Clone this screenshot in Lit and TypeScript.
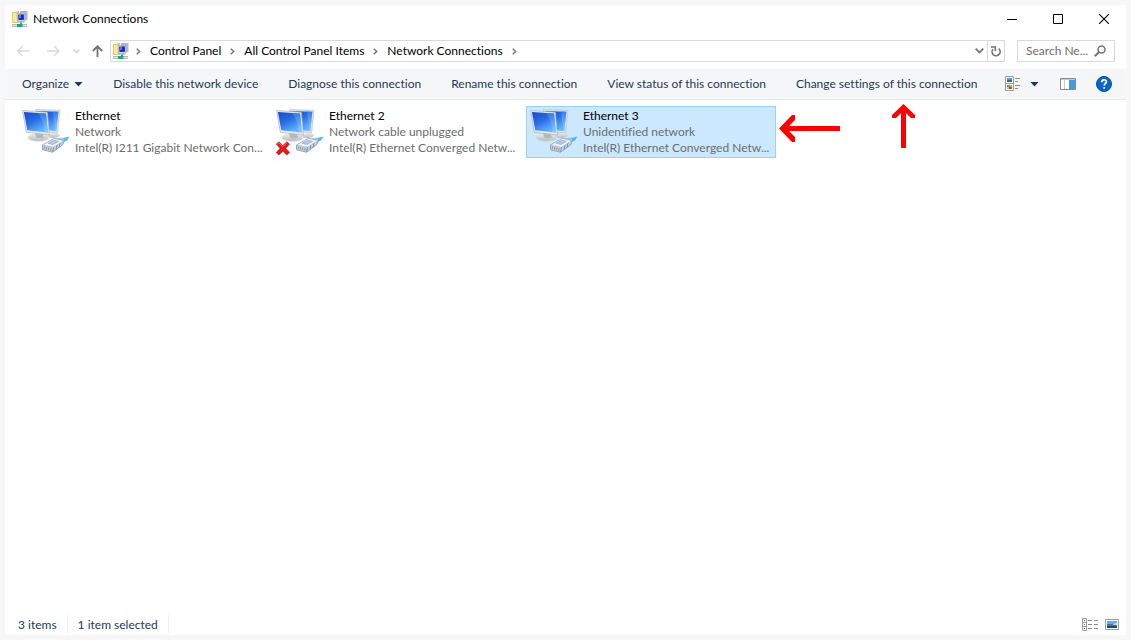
import { LitElement, html, css, svg, nothing } from "lit";
import { customElement, property, state } from "lit/decorators.js";
import { classMap } from "lit/directives/class-map.js";

interface Connection {
  name: string;
  status: string;
  device: string;
  unplugged?: boolean;
}

const connections: Connection[] = [
  { name: "Ethernet", status: "Network", device: "Intel(R) I211 Gigabit Network Con..." },
  {
    name: "Ethernet 2",
    status: "Network cable unplugged",
    device: "Intel(R) Ethernet Converged Netw...",
    unplugged: true,
  },
  { name: "Ethernet 3", status: "Unidentified network", device: "Intel(R) Ethernet Converged Netw..." },
];

const crumbs = ["Control Panel", "All Control Panel Items", "Network Connections"];

const commands = [
  "Disable this network device",
  "Diagnose this connection",
  "Rename this connection",
  "View status of this connection",
  "Change settings of this connection",
];

const folderIcon = html`<svg width="16" height="16" viewBox="0 0 16 16" aria-hidden="true">
  <path d="M0 1h4l1-1h2v11l-2 1H0z" fill="#ecca6c" />
  <path d="M1 2h5v8.500L4 11H1z" fill="#fbe7a0" />
  <path d="M8 0h7.500v9H8z" fill="#b4b8ca" />
  <path d="M9 1h5.500v6.500H9z" fill="#a9b7ea" />
  <path d="M5 2.500 12.500 2l.5 8-7.500.500z" fill="#d5d9e6" stroke="#8d93ab" stroke-width=".6" />
  <path d="M6.200 3.700 11.700 3.200l.3 5.500-5.500.4z" fill="#1525b4" />
  <path d="M7 4.200 9 4l.2 3-2 .3z" fill="#5b83f2" />
  <path d="M6 10.500h6.500v1H6z" fill="#a2a6b6" />
  <path d="M8 11.500h2V13H8z" fill="#18b573" />
  <path d="M0 13.500h15M0 15.500h15" stroke="#b3bcbc" />
  <path d="M0 14.500h15" stroke="#dfe4e4" />
  <path d="M5 13h5.500v3H5z" fill="#12b06c" />
</svg>`;

@customElement("connection-icon")
export class ConnectionIcon extends LitElement {
  @property({ type: Boolean }) unplugged = false;

  static styles = css`
    :host { display: block; width: 48px; height: 48px; }
    svg { display: block; overflow: visible; }
  `;

  render() {
    return html`<svg width="48" height="48" viewBox="0 0 48 48" aria-hidden="true">
      <defs>
        <linearGradient id="screen" x1="0" y1="0" x2=".6" y2="1">
          <stop offset="0" stop-color="#1747c4" />
          <stop offset="0.500" stop-color="#2a6ee6" />
          <stop offset="1" stop-color="#62b6ff" />
        </linearGradient>
        <linearGradient id="shine" x1="0" y1="0" x2="0" y2="1">
          <stop offset="0" stop-color="#3f84ee" />
          <stop offset="1" stop-color="#9bd3ff" />
        </linearGradient>
        <linearGradient id="stand" x1="0" y1="0" x2="0" y2="1">
          <stop offset="0" stop-color="#eceeef" />
          <stop offset="1" stop-color="#b9bdc1" />
        </linearGradient>
      </defs>
      <path d="M25 27.500 34 25.500l4 2.500c0 2-5 3.500-10 3z" fill="url(#stand)" />
      <path d="M13.500 2.500 38 3.300 35.700 26 17 24.500z" fill="#dfe2e5" stroke="#b9bec2" stroke-width=".6" />
      <path d="M15 4 36.300 4.700 34.300 24 18 22.800z" fill="url(#screen)" />
      <path d="M31 4.500 36.300 4.700 34.300 24 33.500 23.900z" fill="url(#shine)" opacity=".7" />
      <ellipse cx="16.500" cy="30.500" rx="10.500" ry="3.800" fill="url(#stand)" stroke="#d2d5d7" stroke-width=".5" />
      <path d="M13 25.500 20 26l2 4c-2 1.800-6 1.800-8 .5z" fill="#b3b8bc" />
      <path d="M.5 3.500 25.300 5.200 27.500 28 4.300 25.300z" fill="#e6e8ea" stroke="#b0b5ba" stroke-width=".7" />
      <path d="M1.900 4.900 24 6.500 26 25.500 5.300 23.200z" fill="url(#screen)" />
      <path d="M16 5.900 24 6.500 26 25.500 22.500 25.100C22.500 17 20 11 16 5.900z" fill="url(#shine)" opacity=".65" />
      <path d="M39.500 33.500 41 31l6.500-1.500-2.500 4-3.500 1.500z" fill="#52bce8" />
      <path d="M36 31.500 41.500 31l1.500 2-4 2.500z" fill="#a5d9ee" stroke="#6ba4c8" stroke-width=".4" />
      <path d="M20.500 38 32.500 31.300 42.500 33.500 40.500 38 30.500 45.300 20.500 42.700z" fill="#c3d1e8" stroke="#758bb4" stroke-width=".7" />
      <path d="M20.500 38 32.500 31.500 42 33.600 31.500 40.200z" fill="#f0f5fb" stroke="#94a8cb" stroke-width=".5" />
      <path d="M31.500 40.200 30.700 45M35 38.200 34 42.500M38 36.300 37 40.300" stroke="#7288b3" stroke-width=".9" />
      <path d="M22.300 39.300v2.800M24.500 39.900v2.800M26.700 40.400v2.800M28.900 41v2.800" stroke="#9c9355" stroke-width=".9" />
      <path d="M26 36.300 31.500 33.200 36.500 34.300 31 37.600z" fill="#b6c8e5" stroke="#8399c4" stroke-width=".5" />
      ${this.unplugged
        ? svg`<path d="M.3 37 3 34.800 6.800 38.500 10.800 34.800 13.500 37 9.800 41.300 13.500 45.500 10.800 48 6.800 44.200 3 48 .3 45.500 4 41.300z" fill="#e01b1b" stroke="#b01316" stroke-width=".6"/><path d="M1.500 37 3 35.900 6.800 39.700 10.800 35.900" fill="none" stroke="#f27b77" stroke-width=".9"/>`
        : nothing}
    </svg>`;
  }
}

@customElement("app-root")
export class AppRoot extends LitElement {
  @state() private selected = 2;

  static styles = css`
    :host {
      display: block;
      box-sizing: border-box;
      min-height: 100vh;
      padding: 5px;
      background: #f7f7f7;
      font: 12px/16px Lato, "Open Sans", sans-serif;
      font-variant-ligatures: none;
      color: #000;
    }
    * { box-sizing: border-box; }
    button, input {
      font: inherit;
      font-variant-ligatures: none;
      color: inherit;
      background: none;
      border: 0;
      padding: 0;
      margin: 0;
      outline: none;
    }
    svg { display: block; flex: none; }
    .window {
      display: flex;
      flex-direction: column;
      min-height: calc(100vh - 10px);
      background: #fff;
    }
    .titlebar { display: flex; align-items: center; gap: 2px; height: 28px; padding-left: 7px; }
    .title { flex: 1; margin: 0; padding-left: 3px; font: inherit; }
    .caption { display: grid; place-items: center; width: 44px; height: 28px; }
    .navigation { display: flex; align-items: center; padding: 7px 11px 7px 12px; }
    .history { display: flex; align-items: center; }
    .nav { display: grid; place-items: center; height: 22px; }
    .nav.back { width: 13px; }
    .nav.forward { width: 13px; margin-left: 17px; }
    .nav.recent { width: 7px; margin: 0 12px 0 13px; }
    .nav.up { width: 11px; margin-right: 7px; }
    .address {
      flex: 1;
      display: flex;
      align-items: center;
      height: 22px;
      border: 1px solid #d9d9d9;
      padding-left: 2px;
    }
    .trail { flex: 1; display: flex; align-items: center; gap: 9px; padding: 0 0 0 7px; margin: 0; list-style: none; }
    .trail li { display: flex; align-items: center; gap: 9px; }
    .trail a { color: inherit; text-decoration: none; }
    .drop { display: grid; place-items: center; width: 15px; height: 20px; }
    .drop.refresh { width: 17px; border-left: 1px solid #d9d9d9; }
    .search {
      display: flex;
      align-items: center;
      width: 98px;
      height: 22px;
      margin-left: 12px;
      padding: 0 8px;
      border: 1px solid #d9d9d9;
      color: #6d6d6d;
    }
    .search input { flex: 1; min-width: 0; }
    .search input::placeholder { color: #6d6d6d; opacity: 1; }
    .commands {
      display: flex;
      align-items: center;
      height: 31px;
      padding: 0 14px 0 2px;
      background: #f5f6f7;
      border-bottom: 1px solid #e8e9ea;
      color: #1e395b;
    }
    .command { display: flex; align-items: center; gap: 5px; padding: 0 15px; height: 30px; white-space: nowrap; }
    .tools { flex: 1; display: flex; align-items: center; justify-content: flex-end; }
    .tool { display: grid; place-items: center; height: 30px; }
    .tool.more { margin: 0 21px 0 9px; }
    .tool.help { margin-left: 20px; }
    .content { position: relative; flex: 1; padding: 6px 13px; }
    .items { display: flex; flex-wrap: wrap; gap: 4px; }
    .item {
      display: flex;
      gap: 5px;
      width: 250px;
      height: 52px;
      padding: 0 3px;
      border: 1px solid transparent;
      text-align: left;
      white-space: nowrap;
    }
    .item.selected { background: #cce8ff; border-color: #99d1ff; }
    .details { display: flex; flex-direction: column; padding-top: 1px; color: #6d6d6d; }
    .name { color: #000; }
    .pointer { position: absolute; pointer-events: none; }
    .pointer.left { left: 774px; top: 15px; }
    .pointer.upward { left: 887px; top: 4px; }
    .status {
      display: flex;
      align-items: center;
      height: 22px;
      padding: 0 7px 0 13px;
      color: #1e395b;
    }
    .count { padding: 2px 10px 0 0; margin-right: 10px; border-right: 1px solid #f0f0f0; }
    .views { flex: 1; display: flex; justify-content: flex-end; align-items: center; gap: 7px; }
  `;

  private chevron() {
    return html`<svg width="5" height="7" viewBox="0 0 5 7" aria-hidden="true">
      <path d="M.7.700 3.700 3.500.700 6.300" fill="none" stroke="#767676" stroke-width="1.500" />
    </svg>`;
  }

  private arrow(stroke: string, flip = false) {
    return html`<svg width="13" height="12" viewBox="0 0 13 12" aria-hidden="true">
      <path d=${flip ? "M0 6h12M7 1l5 5-5 5" : "M12 6H.5M5.500 1l-5 5 5 5"} fill="none" stroke=${stroke} stroke-width="1.500" />
    </svg>`;
  }

  render() {
    return html`<div class="window">
      <header class="titlebar">
        ${folderIcon}
        <h1 class="title">Network Connections</h1>
        <button class="caption" aria-label="Minimize">
          <svg width="10" height="10"><path d="M0 5.500h10" stroke="#000" /></svg>
        </button>
        <button class="caption" aria-label="Maximize">
          <svg width="10" height="10"><path d="M.5.500h9v9h-9z" fill="none" stroke="#000" /></svg>
        </button>
        <button class="caption" aria-label="Close">
          <svg width="10" height="10"><path d="m0 0 10 10M10 0 0 10" stroke="#000" stroke-width="1.100" /></svg>
        </button>
      </header>

      <nav class="navigation">
        <div class="history">
          <button class="nav back" aria-label="Back">${this.arrow("#dadada")}</button>
          <button class="nav forward" aria-label="Forward">${this.arrow("#dadada", true)}</button>
          <button class="nav recent" aria-label="Recent locations">
            <svg width="7" height="5"><path d="m.7.700 2.800 2.800L6.300.700" fill="none" stroke="#d2d2d2" stroke-width="1.500" /></svg>
          </button>
          <button class="nav up" aria-label="Up">
            <svg width="11" height="12" viewBox="0 0 11 12"><path d="M5.500 12V1.500M.8 6l4.700-4.700L10.200 6" fill="none" stroke="#737373" stroke-width="1.800" /></svg>
          </button>
        </div>
        <div class="address">
          ${folderIcon}
          <ol class="trail">
            <li>${this.chevron()}</li>
            ${crumbs.map((crumb) => html`<li><a href="#">${crumb}</a>${this.chevron()}</li>`)}
          </ol>
          <button class="drop" aria-label="Previous locations">
            <svg width="9" height="6"><path d="m.7.700 3.800 3.800L8.300.700" fill="none" stroke="#767676" stroke-width="1.800" /></svg>
          </button>
          <button class="drop refresh" aria-label="Refresh">
            <svg width="10" height="11" viewBox="0 0 10 11">
              <path d="M7.700 2.700A4 4 0 1 1 2 3.200" fill="none" stroke="#737373" stroke-width="1.700" />
              <path d="M0 1h4.300v4" fill="none" stroke="#737373" stroke-width="1.600" />
            </svg>
          </button>
        </div>
        <label class="search">
          <input type="text" aria-label="Search Network Connections" placeholder="Search Ne..." />
          <svg width="12" height="12" viewBox="0 0 12 12" aria-hidden="true">
            <circle cx="7.500" cy="4.500" r="3.500" fill="none" stroke="#737373" stroke-width="1.500" />
            <path d="M5 7 .8 11.200" stroke="#737373" stroke-width="2" />
          </svg>
        </label>
      </nav>

      <div class="commands">
        <button class="command">
          Organize
          <svg width="9" height="5"><path d="M.5 0h8L4.500 4.500z" fill="#1e395b" /></svg>
        </button>
        ${commands.map((label) => html`<button class="command">${label}</button>`)}
        <div class="tools">
          <button class="tool" aria-label="Change your view">
            <svg width="16" height="16" viewBox="0 0 16 16">
              <path d="M.5.500h8v7h-8zM.5 7.500h8v7h-8z" fill="#fff" stroke="#9a9a9a" />
              <path d="M2 2h5v2H2z" fill="#4d9be6" /><path d="M2 4h5v2H2z" fill="#3f6b77" />
              <path d="M2 9h3v2H2z" fill="#7b9d3c" /><path d="M5 9h2v2H5z" fill="#e9a13b" />
              <path d="M2 11h2v2H2z" fill="#a6c5ea" /><path d="M4 11h3v2H4z" fill="#c1452e" />
              <path d="M10 2.500h5M10 5.500h3M10 9.500h5M10 12.500h3" stroke="#8c8c8c" />
            </svg>
          </button>
          <button class="tool more" aria-label="More options">
            <svg width="9" height="5"><path d="M.5 0h8L4.500 4.500z" fill="#1e395b" /></svg>
          </button>
          <button class="tool" aria-label="Show the preview pane">
            <svg width="16" height="12" viewBox="0 0 16 12">
              <path d="M.5.500h15v11H.5z" fill="#fff" stroke="#8c8c8c" />
              <path d="M1 1h14v1H1zM4 2h1v9H4z" fill="#c9c9c9" />
              <path d="M9 2h6v9H9z" fill="#3f9be4" />
            </svg>
          </button>
          <button class="tool help" aria-label="Get help">
            <svg width="16" height="16" viewBox="0 0 16 16">
              <circle cx="8" cy="8" r="7.500" fill="#0a66c8" stroke="#0a4c9c" />
              <path d="M5.800 6.200c0-3.200 4.600-3 4.600-.4 0 1.700-2.200 1.700-2.200 3.700M8.200 11v1.700" fill="none" stroke="#fff" stroke-width="1.700" />
            </svg>
          </button>
        </div>
      </div>

      <main class="content">
        <div class="items">
          ${connections.map(
            (item, index) => html`<button
              class=${classMap({ item: true, selected: index === this.selected })}
              @click=${() => (this.selected = index)}
            >
              <connection-icon ?unplugged=${item.unplugged}></connection-icon>
              <span class="details">
                <span class="name">${item.name}</span>
                <span>${item.status}</span>
                <span>${item.device}</span>
              </span>
            </button>`
          )}
        </div>
        <svg class="pointer left" width="61" height="27" viewBox="0 0 61 27" aria-hidden="true">
          <path d="M0 13.500 13 0h3v5l-6 6h51v5H10l6 6v5h-3z" fill="#f00" />
        </svg>
        <svg class="pointer upward" width="23" height="44" viewBox="0 0 23 44" aria-hidden="true">
          <path d="M11.500 0 23 11v3h-4l-5-5v35H9V9l-5 5H0v-3z" fill="#f00" />
        </svg>
      </main>

      <footer class="status">
        <span class="count">${connections.length} items</span>
        <span class="count">1 item selected</span>
        <div class="views">
          <button aria-label="Details view">
            <svg width="16" height="13" viewBox="0 0 16 13">
              <path d="M.5.500h4v12h-4zM.5 4.500h4M.5 8.500h4" fill="#fff" stroke="#9c9c9c" />
              <path d="M2 2h1v1H2z" fill="#3a7a50" /><path d="M2 6h1v1H2z" fill="#3a77d8" /><path d="M2 10h1v1H2z" fill="#c22" />
              <path d="M6 2.500h4M12 2.500h4M6 6.500h4M12 6.500h4M6 10.500h4M12 10.500h4" stroke="#8a8a8a" />
            </svg>
          </button>
          <button aria-label="Large icons view">
            <svg width="14" height="11" viewBox="0 0 14 11">
              <path d="M.5.500h13v10H.5z" fill="#fff" stroke="#9c9c9c" />
              <path d="M2 2h10v3H2z" fill="#6ea8f0" /><path d="M2 5h10v2H2z" fill="#3e7791" />
              <path d="M2 7h10v2H2z" fill="#1f4a68" /><path d="M7 5.500 12 4v2z" fill="#d6e9fa" />
            </svg>
          </button>
        </div>
      </footer>
    </div>`;
  }
}
